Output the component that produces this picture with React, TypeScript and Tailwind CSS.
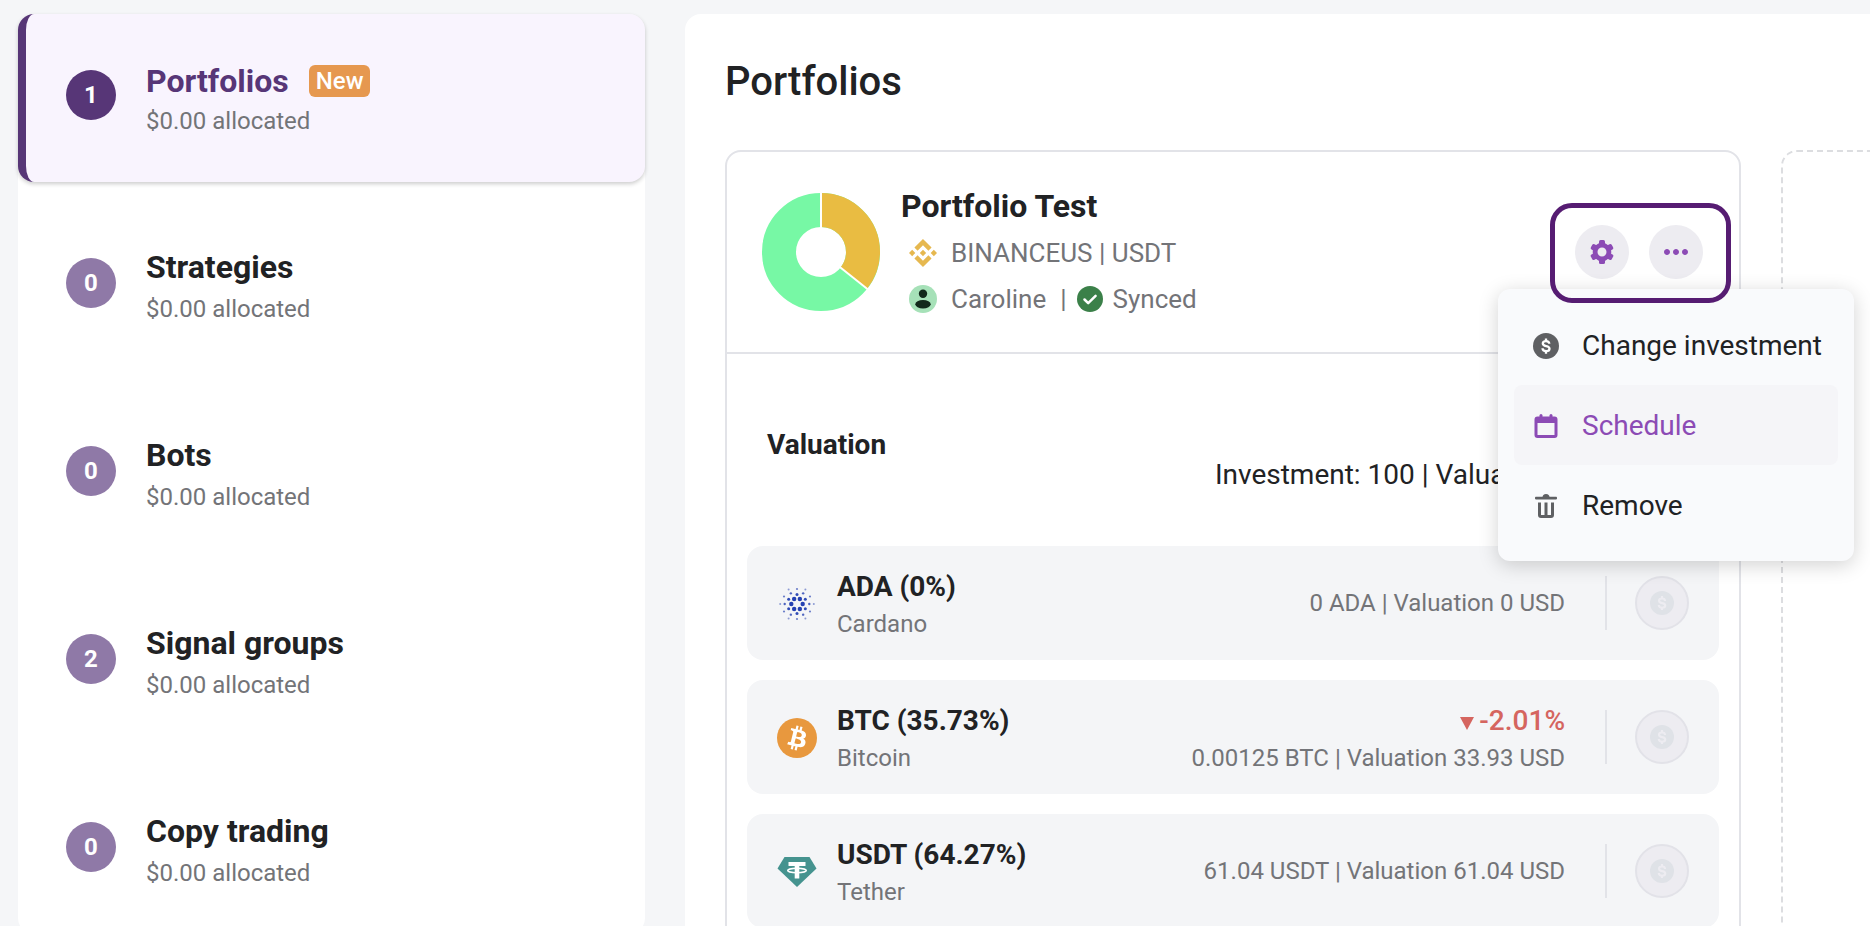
import { MdMoreHoriz } from "react-icons/md";

const sections = [
  { name: "Portfolios", count: 1, active: true, isNew: true },
  { name: "Strategies", count: 0 },
  { name: "Bots", count: 0 },
  { name: "Signal groups", count: 2 },
  { name: "Copy trading", count: 0 },
];

const holdings = [
  { title: "ADA (0%)", name: "Cardano", icon: <CardanoIcon />, value: "0 ADA | Valuation 0 USD" },
  {
    title: "BTC (35.73%)",
    name: "Bitcoin",
    icon: <BitcoinIcon />,
    change: "-2.01%",
    value: "0.00125 BTC | Valuation 33.93 USD",
  },
  { title: "USDT (64.27%)", name: "Tether", icon: <TetherIcon />, value: "61.04 USDT | Valuation 61.04 USD" },
];

function CardanoIcon() {
  const rings = [
    { r: 5.7, size: 2.2, count: 6, start: 0, opacity: 1 },
    { r: 9.6, size: 1.5, count: 6, start: 30, opacity: 0.95 },
    { r: 12.3, size: 1.2, count: 6, start: 0, opacity: 0.8 },
    { r: 15, size: 1.1, count: 6, start: 30, opacity: 0.65 },
    { r: 16.8, size: 1, count: 6, start: 0, opacity: 0.5 },
  ];
  return (
    <svg viewBox="0 0 40 40" className="size-10" fill="#2541b2">
      {rings.map((ring, i) =>
        Array.from({ length: ring.count }, (_, k) => {
          const angle = ((ring.start + k * 60) * Math.PI) / 180;
          return (
            <circle
              key={`${i}-${k}`}
              cx={20 + ring.r * Math.cos(angle)}
              cy={20 + ring.r * Math.sin(angle)}
              r={ring.size}
              opacity={ring.opacity}
            />
          );
        })
      )}
    </svg>
  );
}

function BitcoinIcon() {
  return (
    <svg viewBox="0 0 32 32" className="size-10">
      <circle cx="16" cy="16" r="16" fill="#e8983e" />
      <path
        fill="#fff"
        d="M23.189 14.02c.314-2.096-1.283-3.223-3.465-3.975l.708-2.84-1.728-.43-.69 2.765c-.454-.114-.92-.22-1.385-.326l.695-2.783L15.596 6l-.708 2.839c-.376-.086-.746-.17-1.104-.26l.002-.009-2.384-.595-.46 1.846s1.283.294 1.256.312c.7.175.826.638.805 1.006l-.806 3.235c.048.012.11.03.18.057l-.183-.045-1.13 4.532c-.086.212-.303.531-.793.41.018.025-1.256-.313-1.256-.313l-.858 1.978 2.25.561c.418.105.828.215 1.231.318l-.715 2.872 1.727.43.708-2.84c.472.127.93.245 1.378.357l-.706 2.828 1.728.43.715-2.866c2.948.558 5.164.333 6.097-2.333.752-2.146-.037-3.385-1.588-4.192 1.13-.26 1.98-1.003 2.207-2.538zm-3.95 5.538c-.533 2.147-4.148.986-5.32.695l.95-3.805c1.172.293 4.929.872 4.37 3.11zm.535-5.569c-.487 1.953-3.495.96-4.47.717l.86-3.45c.975.243 4.118.696 3.61 2.733z"
      />
    </svg>
  );
}

function TetherIcon() {
  return (
    <svg viewBox="0 0 40 40" className="size-10">
      <path fill="#45938f" d="M7.500 5h25L39.500 16.500 20 35 .5 16.500z" />
      <path fill="#fff" d="M11.500 10h17v4h-6.200v12.500h-4.600V14h-6.200z" />
      <ellipse cx="20" cy="18.500" rx="9.300" ry="2.200" fill="none" stroke="#fff" strokeWidth="1.500" />
    </svg>
  );
}

function BinanceIcon() {
  return (
    <svg viewBox="0 0 24 24" className="size-7" fill="#e6b84f">
      <path d="M16.624 13.920l2.717 2.716-7.353 7.353-7.353-7.352 2.717-2.717 4.636 4.660 4.636-4.660zm4.637-4.636L24 12l-2.715 2.716L18.568 12l2.693-2.716zm-9.272 0l2.716 2.692-2.717 2.717L9.272 12l2.716-2.715zm-9.273 0L5.410 12l-2.692 2.692L0 12l2.716-2.716zM11.989.011l7.353 7.329-2.717 2.715-4.636-4.636-4.636 4.660-2.717-2.716L11.989.011z" />
    </svg>
  );
}

function AvatarIcon() {
  return (
    <svg viewBox="0 0 28 28" className="size-7">
      <circle cx="14" cy="14" r="14" fill="#a6e1b8" />
      <circle cx="14" cy="8.800" r="4.200" fill="#12291b" />
      <ellipse cx="14" cy="19.300" rx="7.700" ry="4.200" fill="#12291b" />
    </svg>
  );
}

function SyncedIcon() {
  return (
    <svg viewBox="0 0 26 26" className="size-[26px]">
      <circle cx="13" cy="13" r="13" fill="#3b8049" />
      <path
        d="M7.500 13.500l3.700 3.700 7.400-7.400"
        fill="none"
        stroke="#fff"
        strokeWidth="2.500"
        strokeLinecap="round"
        strokeLinejoin="round"
      />
    </svg>
  );
}

function AllocationChart() {
  return (
    <svg viewBox="0 0 120 120" className="size-[120px] shrink-0" role="img" aria-label="Portfolio allocation">
      <circle cx="60" cy="60" r="42" fill="none" stroke="#77f8a5" strokeWidth="34" />
      <circle
        cx="60"
        cy="60"
        r="42"
        fill="none"
        stroke="#e9bc42"
        strokeWidth="34"
        pathLength="100"
        strokeDasharray="35.73 64.27"
        transform="rotate(-90 60 60)"
      />
      <path d="M60 60V0M60 60l47 37.500" stroke="#fff" strokeWidth="2" />
    </svg>
  );
}

function DollarIcon({ className, sign }: { className: string; sign: string }) {
  return (
    <svg viewBox="0 0 26 26" className={className}>
      <circle cx="13" cy="13" r="13" fill="currentColor" />
      <g className={sign} fill="none" strokeWidth="2.300">
        <path d="M16.300 10.800C16.200 9 15 8.100 13.100 8.100c-2 0-3.300.9-3.300 2.400 0 3.800 6.700 1.500 6.700 5.200 0 1.500-1.400 2.400-3.400 2.400-2.200 0-3.500-1-3.600-2.900" />
        <path d="M13 5.500v3M13 17.700v3" />
      </g>
    </svg>
  );
}

function GearIcon() {
  return (
    <svg viewBox="0 0 24 24" className="size-6">
      <circle cx="12" cy="12" r="6.900" fill="none" stroke="#8c4bb5" strokeWidth="4.800" />
      {[0, 60, 120, 180, 240, 300].map((deg) => (
        <rect key={deg} x="9" y="0" width="6" height="6" rx="1.600" fill="#8c4bb5" transform={`rotate(${deg} 12 12)`} />
      ))}
    </svg>
  );
}

function CalendarIcon() {
  return (
    <svg viewBox="0 0 24 24" className="size-6" fill="#8c4bb5">
      <rect x="5.500" y="0" width="3" height="6" rx="1.500" />
      <rect x="15.500" y="0" width="3" height="6" rx="1.500" />
      <path
        fillRule="evenodd"
        d="M3.500 2.500h17a3 3 0 0 1 3 3V21a3 3 0 0 1-3 3h-17a3 3 0 0 1-3-3V5.500a3 3 0 0 1 3-3zM3.500 9v12h17V9z"
      />
    </svg>
  );
}

function TrashIcon() {
  return (
    <svg viewBox="0 0 24 24" className="size-6" fill="#5f6063">
      <rect x="1" y="2.800" width="22" height="2.600" rx="0.800" />
      <path d="M8.500 3.500a3.500 3.500 0 0 1 7 0z" />
      <path d="M4 8.500h3V21h3.500V8.500h3V21H17V8.500h3V21a3 3 0 0 1-3 3H7a3 3 0 0 1-3-3z" />
    </svg>
  );
}

function Sidebar() {
  return (
    <nav className="flex flex-col gap-5 self-start rounded-2xl bg-white">
      {sections.map((s) => (
        <a
          key={s.name}
          href="#"
          className={
            s.active
              ? "flex items-center gap-[30px] rounded-2xl border-l-8 border-[#573677] bg-[#f9f4fe] pt-[43px] pb-[45px] pl-10 shadow-[0_2px_4px_rgba(0,0,0,0.2)]"
              : "flex items-center gap-[30px] pt-[43px] pb-[41px] pl-12"
          }
        >
          <span
            className={
              s.active
                ? "mb-1 flex size-[50px] items-center justify-center rounded-full bg-[#573677] text-2xl font-bold text-white"
                : "mb-2 flex size-[50px] items-center justify-center rounded-full bg-[#8f79a7] text-2xl font-bold text-white"
            }
          >
            {s.count}
          </span>
          <span>
            <span className="flex items-center gap-5">
              <span className={s.active ? "text-[32px] leading-[48px] font-bold text-[#573677]" : "text-[32px] leading-[44px] font-bold"}>
                {s.name}
              </span>
              {s.isNew && (
                <span className="rounded-md bg-[#e6984f] px-[7px] text-2xl leading-8 font-medium text-white">New</span>
              )}
            </span>
            <span className={s.active ? "block text-2xl leading-8 text-[#737478]" : "block text-2xl leading-10 text-[#737478]"}>
              $0.00 allocated
            </span>
          </span>
        </a>
      ))}
    </nav>
  );
}

function ActionMenu() {
  const item = "flex h-20 w-full items-center gap-5 rounded-lg pt-0.5 pl-4 text-left text-[28px]";
  return (
    <div
      role="menu"
      className="absolute top-16 -right-[151px] z-10 w-[356px] rounded-xl bg-[#f9fafc] p-4 shadow-[0_4px_20px_rgba(0,0,0,0.18)]"
    >
      <button role="menuitem" className={item}>
        <span className="flex w-8 justify-center">
          <DollarIcon className="size-[26px] text-[#5f6063]" sign="stroke-white" />
        </span>
        <span className="whitespace-nowrap">Change investment</span>
      </button>
      <button role="menuitem" className={`${item} bg-[#f5f5f8] text-[#8c4bb5]`}>
        <span className="flex w-8 justify-center">
          <CalendarIcon />
        </span>
        Schedule
      </button>
      <button role="menuitem" className={item}>
        <span className="flex w-8 justify-center">
          <TrashIcon />
        </span>
        Remove
      </button>
    </div>
  );
}

function PortfolioHeader() {
  return (
    <header className="flex h-[202px] items-center gap-5 border-b-2 border-[#e2e3e8] pr-9 pl-[34px]">
      <AllocationChart />
      <div className="flex-1">
        <h2 className="text-[32px] leading-[48px] font-bold">Portfolio Test</h2>
        <div className="ml-2 flex h-[46px] items-center gap-[14px] text-[26px] text-[#737478]">
          <BinanceIcon />
          <span>BINANCEUS | USDT</span>
        </div>
        <div className="ml-2 flex h-[46px] items-center gap-[14px] text-[26px] text-[#737478]">
          <AvatarIcon />
          <span>Caroline</span>
          <span className="flex items-center gap-[10px]">
            <span>|</span>
            <SyncedIcon />
            Synced
          </span>
        </div>
      </div>
      <div className="relative flex gap-5">
        <button aria-label="Settings" className="flex size-[54px] items-center justify-center rounded-full bg-[#edecf1]">
          <GearIcon />
        </button>
        <button aria-label="More actions" className="flex size-[54px] items-center justify-center rounded-full bg-[#edecf1]">
          <MdMoreHoriz className="size-9 text-[#8c4bb5]" />
        </button>
        <ActionMenu />
        <div className="pointer-events-none absolute -top-[22px] -right-7 -bottom-6 -left-[25px] z-20 rounded-[22px] border-[5px] border-[#561c72]" />
      </div>
    </header>
  );
}

function Holdings() {
  return (
    <ul className="flex flex-col gap-5 px-5 pb-5">
      {holdings.map((h) => (
        <li key={h.name} className="flex h-[114px] items-center rounded-2xl bg-[#f4f5f7] px-[30px]">
          <div className="flex flex-1 items-center gap-5 pt-0.5">
            {h.icon}
            <div>
              <div className="text-[28px] leading-10 font-bold">{h.title}</div>
              <div className="text-2xl leading-[34px] text-[#737478]">{h.name}</div>
            </div>
          </div>
          <div className={h.change ? "pt-0.5 text-right" : "text-right"}>
            {h.change && (
              <div className="flex items-center justify-end gap-[5px] text-[28px] leading-10 font-medium text-[#d5655f]">
                <svg viewBox="0 0 14 13" className="mt-1 h-[13px] w-[14px]" fill="currentColor">
                  <path d="M0 0h14L7 13z" />
                </svg>
                {h.change}
              </div>
            )}
            <div className="text-2xl leading-[34px] text-[#737478]">{h.value}</div>
          </div>
          <div className="mr-7 ml-10 h-[54px] w-[2px] bg-[#e2e3e8]" />
          <button
            disabled
            aria-label={`Trade ${h.name}`}
            className="flex size-[54px] items-center justify-center rounded-full border-2 border-[#e2e2e8] bg-[#edecf1]"
          >
            <DollarIcon className="size-6 text-[#dfe2e7]" sign="stroke-[#edecf1]" />
          </button>
        </li>
      ))}
    </ul>
  );
}

export default function App() {
  return (
    <div className="h-screen overflow-hidden bg-[#f5f6f8] pt-[14px] pl-[18px] font-['Roboto',sans-serif] text-[#212224]">
      <div className="grid grid-cols-[minmax(0,627fr)_minmax(0,1185fr)] gap-10">
        <Sidebar />
        <main className="min-h-screen rounded-tl-2xl bg-white pt-10 pl-10">
          <h1 className="mb-10 text-[40px] leading-[56px] font-medium">Portfolios</h1>
          <div className="grid grid-cols-[minmax(0,1016fr)_minmax(0,89fr)] gap-10">
            <section className="rounded-2xl border-2 border-[#e2e3e8]">
              <PortfolioHeader />
              <div className="flex h-[192px] items-start justify-between pt-[71px] pr-[42px] pl-10">
                <h3 className="text-[28px] leading-10 font-bold">Valuation</h3>
                <p className="mt-[30px] text-[28px] leading-10">Investment: 100 | Valuation: 94.97 USD</p>
              </div>
              <Holdings />
            </section>
            <section className="rounded-l-2xl border-2 border-r-0 border-dashed border-[#dcdde0]" />
          </div>
        </main>
      </div>
    </div>
  );
}
